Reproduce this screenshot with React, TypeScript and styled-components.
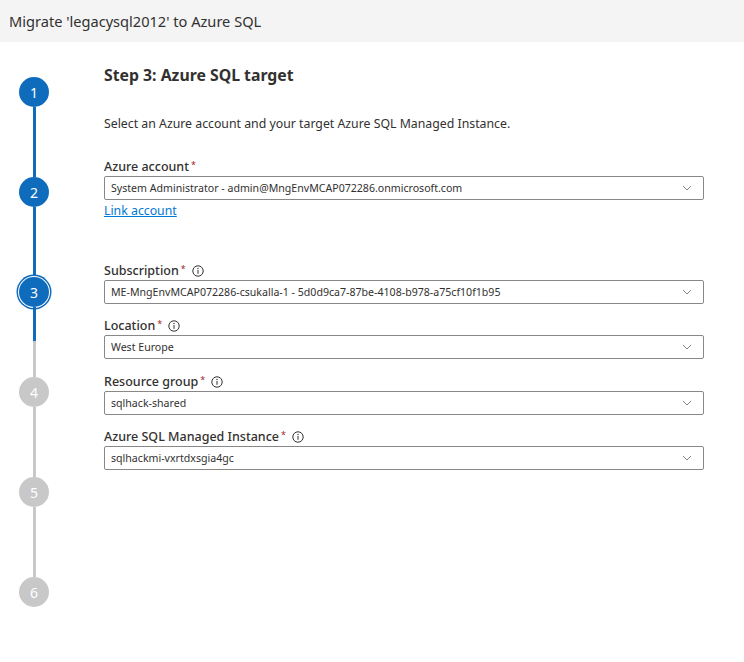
import styled, { createGlobalStyle, css } from 'styled-components';

const Global = createGlobalStyle`
  html, body { margin: 0; padding: 0; background: #fff; }
  body { font-family: "Noto Sans", "Open Sans", sans-serif; color: #323130; }
`;

const Page = styled.div`
  width: 744px;
  height: 662px;
  display: flex;
  flex-direction: column;
  overflow: hidden;
`;

const Header = styled.div`
  height: 42px;
  background: #f4f4f4;
  display: flex;
  align-items: center;
  padding-left: 9px;
  font-size: 14.6px;
  color: #323130;
`;

const Body = styled.div`
  display: flex;
`;

const Rail = styled.div`
  width: 68px;
  display: flex;
  flex-direction: column;
  align-items: center;
  padding-top: 35px;
`;

const Step = styled.div`
  display: flex;
  flex-direction: column;
  align-items: center;
`;

const blue = '#0f6cbd';
const grey = '#c8c8c8';

const Circle = styled.div<{ $state: 'done' | 'current' | 'todo' }>`
  width: 30px;
  height: 30px;
  border-radius: 50%;
  display: flex;
  align-items: center;
  justify-content: center;
  color: #fff;
  font-size: 14px;
  flex-shrink: 0;
  background: ${p => (p.$state === 'todo' ? grey : blue)};
  ${p =>
    p.$state === 'current' &&
    css`
      box-shadow: 0 0 0 1px #fff, 0 0 0 2.5px ${blue};
    `}
`;

const Connector = styled.div<{ $fill: number }>`
  width: 3px;
  height: 70px;
  background: linear-gradient(
    to bottom,
    ${blue} 0,
    ${blue} ${p => p.$fill}px,
    ${grey} ${p => p.$fill}px,
    ${grey} 100%
  );
`;

const Content = styled.div`
  width: 600px;
  margin-left: 36px;
  padding-top: 23px;
  display: flex;
  flex-direction: column;
`;

const Title = styled.h2`
  margin: 0;
  font-size: 15.8px;
  line-height: 20px;
  font-weight: 700;
  color: #323130;
`;

const Description = styled.p`
  margin: 30px 0 0;
  font-size: 12.3px;
  line-height: 18px;
`;

const Field = styled.div<{ $gap: number }>`
  display: flex;
  flex-direction: column;
  margin-top: ${p => p.$gap}px;
`;

const Label = styled.label`
  display: flex;
  align-items: center;
  font-size: 12.5px;
  font-weight: 500;
  line-height: 16px;
  height: 16px;
`;

const Required = styled.span`
  color: #a4262c;
  font-size: 9px;
  font-weight: 400;
  margin-left: 2px;
  align-self: flex-start;
  line-height: 12px;
`;

const InfoIcon = styled.svg`
  margin-left: 6px;
  width: 12px;
  height: 12px;
`;

const Select = styled.div`
  margin-top: 1px;
  height: 24px;
  box-sizing: border-box;
  border: 1px solid #8a8886;
  border-radius: 2px;
  display: flex;
  align-items: center;
  justify-content: space-between;
  padding: 0 11px 0 6px;
  font-size: 10.6px;
  color: #323130;
`;

const Link = styled.a`
  margin-top: 2px;
  font-size: 12.3px;
  line-height: 18px;
  color: #0078d4;
  text-decoration: underline;
  align-self: flex-start;
`;

function Chevron() {
  return (
    <svg width="10" height="6" viewBox="0 0 10 6">
      <path d="M1 1l4 4 4-4" fill="none" stroke="#8a7f8f" strokeWidth="1" />
    </svg>
  );
}

function Info() {
  return (
    <InfoIcon viewBox="0 0 12 12">
      <circle cx="6" cy="6" r="5.2" fill="none" stroke="#323130" strokeWidth="1" />
      <rect x="5.5" y="5" width="1" height="3.8" fill="#323130" />
      <circle cx="6" cy="3.5" r="0.7" fill="#323130" />
    </InfoIcon>
  );
}

const steps: { n: number; state: 'done' | 'current' | 'todo'; fill: number }[] = [
  { n: 1, state: 'done', fill: 70 },
  { n: 2, state: 'done', fill: 70 },
  { n: 3, state: 'current', fill: 34 },
  { n: 4, state: 'todo', fill: 0 },
  { n: 5, state: 'todo', fill: 0 },
  { n: 6, state: 'todo', fill: 0 },
];

const fields = [
  { label: 'Subscription', value: 'ME-MngEnvMCAP072286-csukalla-1 - 5d0d9ca7-87be-4108-b978-a75cf10f1b95', gap: 43 },
  { label: 'Location', value: 'West Europe', gap: 14 },
  { label: 'Resource group', value: 'sqlhack-shared', gap: 15 },
  { label: 'Azure SQL Managed Instance', value: 'sqlhackmi-vxrtdxsgia4gc', gap: 14 },
];

export default function App() {
  return (
    <Page>
      <Global />
      <Header>Migrate 'legacysql2012' to Azure SQL</Header>
      <Body>
        <Rail>
          {steps.map(s => (
            <Step key={s.n}>
              <Circle $state={s.state}>{s.n}</Circle>
              {s.n < 6 && <Connector $fill={s.fill} />}
            </Step>
          ))}
        </Rail>
        <Content>
          <Title>Step 3: Azure SQL target</Title>
          <Description>Select an Azure account and your target Azure SQL Managed Instance.</Description>
          <Field $gap={26}>
            <Label>
              Azure account<Required>*</Required>
            </Label>
            <Select>
              System Administrator - admin@MngEnvMCAP072286.onmicrosoft.com
              <Chevron />
            </Select>
            <Link href="#">Link account</Link>
          </Field>
          {fields.map(f => (
            <Field key={f.label} $gap={f.gap}>
              <Label>
                {f.label}
                <Required>*</Required>
                <Info />
              </Label>
              <Select>
                {f.value}
                <Chevron />
              </Select>
            </Field>
          ))}
        </Content>
      </Body>
    </Page>
  );
}
